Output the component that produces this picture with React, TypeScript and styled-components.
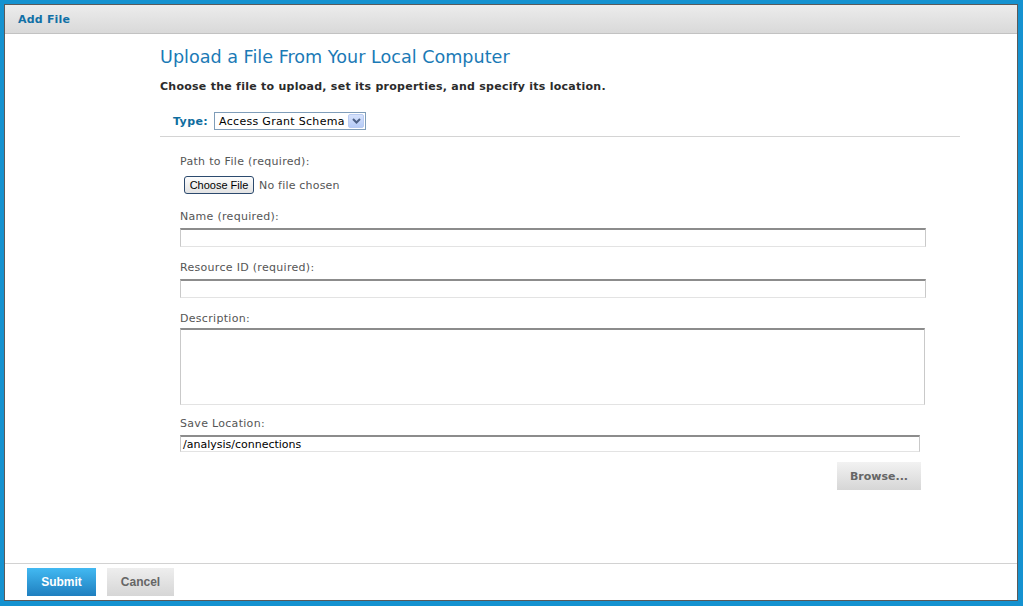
import styled, { createGlobalStyle } from "styled-components";

const GlobalStyle = createGlobalStyle`
  html, body {
    margin: 0;
    padding: 0;
    background: #1592d0;
  }
  * {
    box-sizing: border-box;
  }
`;

const Frame = styled.div`
  width: 1023px;
  height: 606px;
  padding: 4px 5px 5px 4px;
  background: #1592d0;
`;

const Panel = styled.div`
  height: 100%;
  display: flex;
  flex-direction: column;
  background: #fff;
  border: 1px solid #5a5a5a;
  font-family: "DejaVu Sans", Verdana, sans-serif;
`;

const Header = styled.div`
  height: 29px;
  flex: none;
  display: flex;
  align-items: center;
  padding-left: 13px;
  background: linear-gradient(#ececec, #d9d9d9);
  border-bottom: 1px solid #c2c2c2;
  h1 {
    margin: 0;
    font-size: 11px;
    font-weight: 700;
    letter-spacing: 0.2px;
    color: #1170a6;
  }
`;

const Body = styled.div`
  flex: 1;
  padding: 12px 0 0 155px;
`;

const Content = styled.div`
  width: 800px;
`;

const Title = styled.h2`
  margin: 0;
  font-size: 17.6px;
  line-height: 22px;
  font-weight: 400;
  color: #1b7ab6;
`;

const Intro = styled.p`
  margin: 12px 0 0;
  font-size: 11px;
  line-height: 14px;
  font-weight: 700;
  letter-spacing: 0.26px;
  color: #2b2b2b;
`;

const TypeRow = styled.div`
  display: flex;
  align-items: center;
  gap: 6px;
  margin-top: 18px;
  padding: 0 0 6px 13px;
  border-bottom: 1px solid #d4d4d4;
`;

const TypeLabel = styled.span`
  font-size: 11px;
  font-weight: 700;
  letter-spacing: 0.4px;
  color: #0f6d9f;
`;

const Select = styled.div`
  width: 152px;
  height: 18px;
  display: flex;
  align-items: center;
  justify-content: space-between;
  padding: 0 1px 0 4px;
  border: 1px solid #7f9db9;
  font-size: 11px;
  letter-spacing: 0.3px;
  color: #000;
`;

const SelectArrow = styled.span`
  width: 16px;
  height: 14px;
  display: flex;
  align-items: center;
  justify-content: center;
  background: linear-gradient(#d6e2fc, #b6cbf6);
  border: 1px solid #b8cbf1;
  border-radius: 2px;
`;

const Fields = styled.div`
  padding: 16px 0 0 20px;
`;

const Label = styled.div<{ $gap: number }>`
  margin-top: ${(p) => p.$gap}px;
  padding-top: 2px;
  font-size: 11px;
  line-height: 14px;
  letter-spacing: 0.3px;
  color: #555;
`;

const FileRow = styled.div`
  display: flex;
  align-items: center;
  gap: 5px;
  margin: 7px 0 0 4px;
`;

const ChooseButton = styled.span`
  width: 70px;
  height: 18px;
  display: flex;
  align-items: center;
  justify-content: center;
  border: 1px solid #2c4a6e;
  border-radius: 3px;
  background: linear-gradient(#fdfdfd, #e3e3e3);
  font-family: "Liberation Sans", Arial, sans-serif;
  font-size: 11px;
  color: #000;
`;

const NoFile = styled.span`
  font-size: 11px;
  letter-spacing: 0.2px;
  color: #555;
`;

const TextBox = styled.div<{ $width: number; $height: number; $gap?: number }>`
  width: ${(p) => p.$width}px;
  height: ${(p) => p.$height}px;
  margin-top: ${(p) => p.$gap ?? 4}px;
  padding: 0 2px;
  display: flex;
  align-items: center;
  border: 1px solid #c9c9c9;
  border-top: 2px solid #8c8c8c;
  border-bottom-color: #e3e3e3;
  font-size: 11px;
  color: #000;
`;

const BrowseRow = styled.div`
  width: 741px;
  display: flex;
  justify-content: flex-end;
  margin-top: 10px;
`;

const GrayButton = styled.span<{ $width: number }>`
  width: ${(p) => p.$width}px;
  height: 28px;
  display: flex;
  align-items: center;
  justify-content: center;
  background: linear-gradient(#f2f2f2, #d6d6d6);
  font-size: 11px;
  font-weight: 700;
  color: #666;
`;

const Footer = styled.div`
  height: 37px;
  flex: none;
  display: flex;
  gap: 11px;
  padding: 4px 0 0 22px;
  border-top: 1px solid #d2d2d2;
`;

const BlueButton = styled.span`
  width: 69px;
  height: 28px;
  display: flex;
  align-items: center;
  justify-content: center;
  background: linear-gradient(#42b9f2, #1f7fbf);
  font-family: "Liberation Sans", Arial, sans-serif;
  font-size: 12px;
  font-weight: 700;
  color: #fff;
`;

const CancelButton = styled(BlueButton)`
  width: 67px;
  background: linear-gradient(#eeeeee, #d6d6d6);
  color: #666;
`;

export default function App() {
  return (
    <>
      <GlobalStyle />
      <Frame>
        <Panel>
          <Header>
            <h1>Add File</h1>
          </Header>
          <Body>
            <Content>
              <Title>Upload a File From Your Local Computer</Title>
              <Intro>Choose the file to upload, set its properties, and specify its location.</Intro>
              <TypeRow>
                <TypeLabel>Type:</TypeLabel>
                <Select>
                  <span>Access Grant Schema</span>
                  <SelectArrow>
                    <svg width="9" height="6" viewBox="0 0 9 6">
                      <path d="M1 1l3.5 3.5L8 1" fill="none" stroke="#4d6185" strokeWidth="2" />
                    </svg>
                  </SelectArrow>
                </Select>
              </TypeRow>
              <Fields>
                <Label $gap={0}>Path to File (required):</Label>
                <FileRow>
                  <ChooseButton>Choose File</ChooseButton>
                  <NoFile>No file chosen</NoFile>
                </FileRow>
                <Label $gap={14}>Name (required):</Label>
                <TextBox $width={746} $height={19} />
                <Label $gap={12}>Resource ID (required):</Label>
                <TextBox $width={746} $height={19} />
                <Label $gap={12}>Description:</Label>
                <TextBox $width={745} $height={77} $gap={2} />
                <Label $gap={10}>Save Location:</Label>
                <TextBox $width={740} $height={17}>/analysis/connections</TextBox>
                <BrowseRow>
                  <GrayButton $width={84}>Browse...</GrayButton>
                </BrowseRow>
              </Fields>
            </Content>
          </Body>
          <Footer>
            <BlueButton>Submit</BlueButton>
            <CancelButton>Cancel</CancelButton>
          </Footer>
        </Panel>
      </Frame>
    </>
  );
}
